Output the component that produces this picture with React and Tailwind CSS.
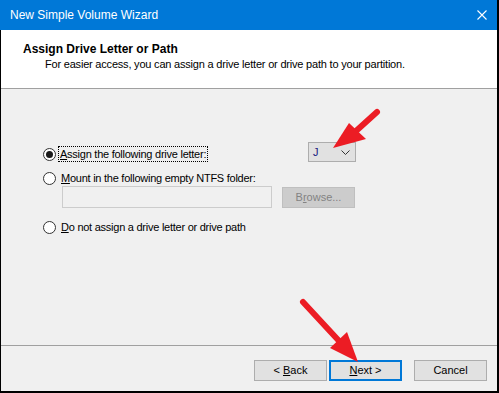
import React from "react";

const F = { fontFamily: '"Liberation Sans", Arial, sans-serif' };

function Radio({ checked }) {
  return (
    <span className="relative flex h-[13px] w-[13px] shrink-0 items-center justify-center rounded-full border border-[#333333] bg-white">
      {checked && <span className="h-[7px] w-[7px] rounded-full bg-[#1a1a1a]" />}
    </span>
  );
}

function Btn({ children, focused }) {
  return (
    <div
      className={
        "flex h-[21px] w-[73px] items-center justify-center bg-[#e1e1e1] text-[11px] text-black " +
        (focused ? "border-2 border-[#0078d7]" : "border border-[#adadad]")
      }
    >
      {children}
    </div>
  );
}

export default function App() {
  return (
    <div className="relative flex h-[393px] w-[499px] flex-col bg-white" style={F}>
      {/* Title bar */}
      <div className="flex h-[30px] shrink-0 items-center justify-between border-r-2 border-black bg-[#0078d7] pl-[10px] pr-[9px]">
        <span className="text-[12px] text-white">New Simple Volume Wizard</span>
        <svg width="10" height="10" viewBox="0 0 10 10" className="mr-[1px]">
          <path d="M0.5 0.5 L9.5 9.5 M9.5 0.5 L0.5 9.5" stroke="white" strokeWidth="1.1" />
        </svg>
      </div>

      <div className="flex flex-1 flex-col border-b-2 border-l border-r-2 border-black">
        {/* Header */}
        <div className="h-[59px] shrink-0 border-b border-[#a0a0a0] bg-white pl-[22px] pt-[12px]">
          <div className="text-[12px] font-bold leading-[14px] text-black">Assign Drive Letter or Path</div>
          <div className="ml-[22px] mt-[2px] text-[11px] leading-[13px] tracking-[-0.2px] text-black">
            For easier access, you can assign a drive letter or drive path to your partition.
          </div>
        </div>

        {/* Body */}
        <div className="flex flex-1 flex-col bg-[#f0f0f0] pl-[42px] pt-[53px]">
          <div className="flex w-[313px] items-start justify-between">
            <div className="mt-[4px] flex h-[16px] items-center">
              <Radio checked />
              <span className="ml-[2px] flex h-[16px] items-center border border-dotted border-black px-[1px] text-[11px] tracking-[-0.25px] text-black">
                <span className="underline">A</span>ssign the following drive letter:
              </span>
            </div>
            <div className="flex h-[20px] w-[48px] items-center justify-between border border-[#adadad] bg-[#e1e1e1] pl-[4px] pr-[5px] text-[11px] text-[#1a1a80]">
              <span>J</span>
              <svg width="9" height="5" viewBox="0 0 9 5">
                <path d="M0.5 0.5 L4.5 4.5 L8.5 0.5" stroke="#333" strokeWidth="1" fill="none" />
              </svg>
            </div>
          </div>

          <div className="mt-[8px] flex h-[16px] items-center">
            <Radio />
            <span className="ml-[5px] text-[11px] tracking-[-0.25px] text-black">
              <span className="underline">M</span>ount in the following empty NTFS folder:
            </span>
          </div>

          <div className="ml-[19px] flex items-start">
            <div className="h-[22px] w-[210px] border border-[#cccccc] bg-[#f0f0f0]" />
            <div className="ml-[10px] mt-[1px] flex h-[21px] w-[73px] items-center justify-center border border-[#bfbfbf] bg-[#cccccc] text-[11px] text-[#838383]">
              B<span className="underline">r</span>owse...
            </div>
          </div>

          <div className="mt-[11px] flex h-[16px] items-center">
            <Radio />
            <span className="ml-[5px] text-[11px] tracking-[-0.25px] text-black">
              <span className="underline">D</span>o not assign a drive letter or drive path
            </span>
          </div>
        </div>

        {/* Footer */}
        <div className="h-[46px] shrink-0 border-t border-[#a0a0a0] bg-[#f0f0f0]">
          <div className="flex justify-end pr-[10px] pt-[14px]">
            <Btn>
              &lt; <span className="ml-[3px] underline">B</span>ack
            </Btn>
            <div className="ml-[2px]">
              <Btn focused>
                <span className="underline">N</span>ext &gt;
              </Btn>
            </div>
            <div className="ml-[12px]">
              <Btn>Cancel</Btn>
            </div>
          </div>
        </div>
      </div>

      {/* Red arrows */}
      <svg className="pointer-events-none absolute left-0 top-0" width="499" height="393" viewBox="0 0 499 393">
        <path d="M377 112 L356 131" stroke="#ec1c24" strokeWidth="6" strokeLinecap="round" />
        <polygon points="333,148 349,123 366,139" fill="#ec1c24" />
        <path d="M303 302 L340 342" stroke="#ec1c24" strokeWidth="6" strokeLinecap="round" />
        <polygon points="358,362 330,348 347,332" fill="#ec1c24" />
      </svg>
    </div>
  );
}
